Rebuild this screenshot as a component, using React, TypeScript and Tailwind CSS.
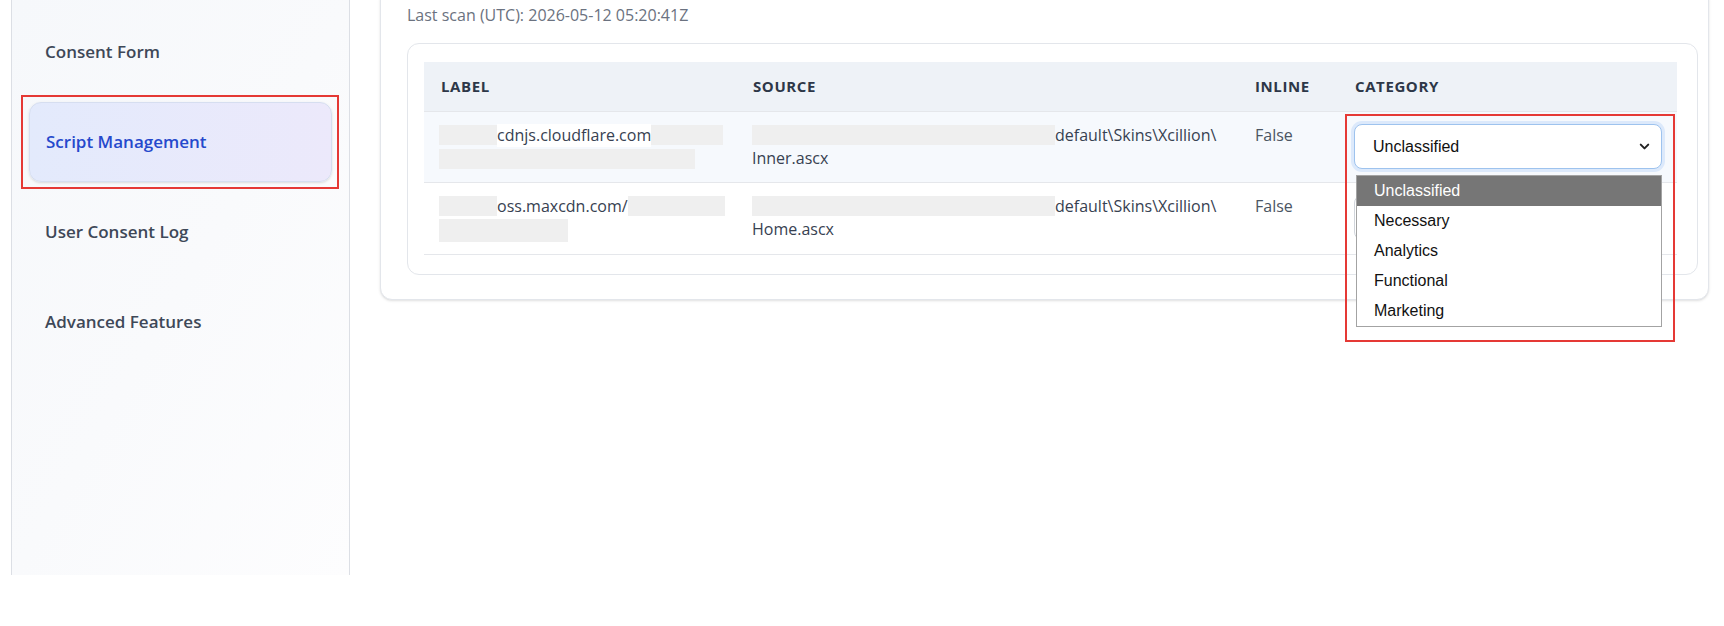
import { ChevronDown } from "lucide-react";

const navItems = ["Consent Form", "Script Management", "User Consent Log", "Advanced Features"];
const categories = ["Unclassified", "Necessary", "Analytics", "Functional", "Marketing"];

function Redacted({ w, h = 20 }: { w: number; h?: number }) {
  return <span className="inline-block shrink-0 bg-[#efefef] align-middle" style={{ width: w, height: h }} />;
}

function FakeSelect({ open }: { open?: boolean }) {
  return (
    <div
      className={
        "flex h-[45px] w-[308px] items-center justify-between rounded-lg border bg-white pl-[18px] pr-[9px] font-['Liberation_Sans',Arial,sans-serif] text-[16px] text-[#111] " +
        (open ? "border-[#9ec3ee] ring-[3px] ring-[#dce9fb]" : "border-[#d1d5db]")
      }
    >
      <span>{open ? "Unclassified" : ""}</span>
      <ChevronDown size={15} strokeWidth={3.2} className="text-[#222]" />
    </div>
  );
}

export default function App() {
  return (
    <div className="flex h-[626px] overflow-hidden bg-white font-['Open_Sans',sans-serif]">
      <aside className="ml-[11px] h-[575px] w-[339px] shrink-0 border-x border-[#dcdfe5] bg-gradient-to-br from-[#f6f8fb] via-[#f9fafc] to-[#fdfdfe]">
        <nav className="flex flex-col gap-[10px] px-[17px] pt-[12px]">
          {navItems.map((item) =>
            item === "Script Management" ? (
              <div key={item} className="relative">
                <div className="flex h-[80px] items-center rounded-xl border border-[#d6def0] bg-gradient-to-r from-[#e3eafc] to-[#ece9fb] pl-4 text-[17px] font-semibold text-[#2549cc] shadow-sm">
                  {item}
                </div>
                <div className="pointer-events-none absolute -bottom-[7px] -left-[8px] -right-[7px] -top-[7px] border-2 border-[#e53935]" />
              </div>
            ) : (
              <div key={item} className="flex h-[80px] items-center pl-4 text-[17px] font-semibold text-[#3e4858]">
                {item}
              </div>
            )
          )}
        </nav>
      </aside>

      <main className="flex-1 pl-[30px] pr-[15px]">
        <div className="-mt-3 rounded-xl border border-[#e3e6eb] bg-white pb-6 pl-[26px] pr-[10px] pt-[15px] shadow-sm">
          <p className="mb-[17px] text-[16px] leading-[22px] text-[#6b7280]">Last scan (UTC): 2026-05-12 05:20:41Z</p>

          <div className="rounded-xl border border-[#e3e6eb] pb-[19px] pl-4 pr-5 pt-[18px]">
            <table className="w-full table-fixed border-collapse text-left">
              <colgroup>
                <col className="w-[312px]" />
                <col className="w-[502px]" />
                <col className="w-[100px]" />
                <col />
              </colgroup>
              <thead>
                <tr className="h-[49px] border-b border-[#e5e7eb] bg-[#eef2f7] text-[15px] font-bold uppercase tracking-[0.04em] text-[#2d3748]">
                  <th className="pl-[17px]">Label</th>
                  <th className="pl-[17px]">Source</th>
                  <th className="pl-[17px]">Inline</th>
                  <th className="pl-[17px]">Category</th>
                </tr>
              </thead>
              <tbody className="text-[16px] leading-[23px] text-[#374151]">
                <tr className="border-b border-[#e5e7eb] bg-[#f6f9fd] align-top">
                  <td className="py-3 pl-[15px]">
                    <div className="flex items-center">
                      <Redacted w={58} />
                      <span className="bg-white">cdnjs.cloudflare.com</span>
                      <Redacted w={72} />
                    </div>
                    <Redacted w={256} />
                  </td>
                  <td className="py-3 pl-4">
                    <div className="flex items-center whitespace-nowrap">
                      <Redacted w={303} />
                      <span>default\Skins\Xcillion\</span>
                    </div>
                    <div>Inner.ascx</div>
                  </td>
                  <td className="py-3 pl-[17px] text-[#4b5563]">False</td>
                  <td className="py-3 pl-4">
                    <div className="relative">
                      <FakeSelect open />
                      <div className="absolute left-[2px] top-[51px] z-20 w-[306px] border border-[#a3a3a3] bg-white font-['Liberation_Sans',Arial,sans-serif] text-[16px] leading-[30px] text-[#111]">
                        {categories.map((c, i) => (
                          <div key={c} className={"h-[30px] pl-[17px] " + (i === 0 ? "bg-[#767676] text-white" : "")}>
                            {c}
                          </div>
                        ))}
                      </div>
                      <div className="pointer-events-none absolute -left-[9px] -top-[10px] z-30 h-[228px] w-[330px] border-2 border-[#e53935]" />
                    </div>
                  </td>
                </tr>
                <tr className="border-b border-[#e5e7eb] align-top">
                  <td className="py-3 pl-[15px]">
                    <div className="flex items-center">
                      <Redacted w={58} />
                      <span>oss.maxcdn.com/</span>
                      <Redacted w={97} />
                    </div>
                    <Redacted w={129} h={23} />
                  </td>
                  <td className="py-3 pl-4">
                    <div className="flex items-center whitespace-nowrap">
                      <Redacted w={303} />
                      <span>default\Skins\Xcillion\</span>
                    </div>
                    <div>Home.ascx</div>
                  </td>
                  <td className="py-3 pl-[17px] text-[#4b5563]">False</td>
                  <td className="py-3 pl-4">
                    <FakeSelect />
                  </td>
                </tr>
              </tbody>
            </table>
          </div>
        </div>
      </main>
    </div>
  );
}
